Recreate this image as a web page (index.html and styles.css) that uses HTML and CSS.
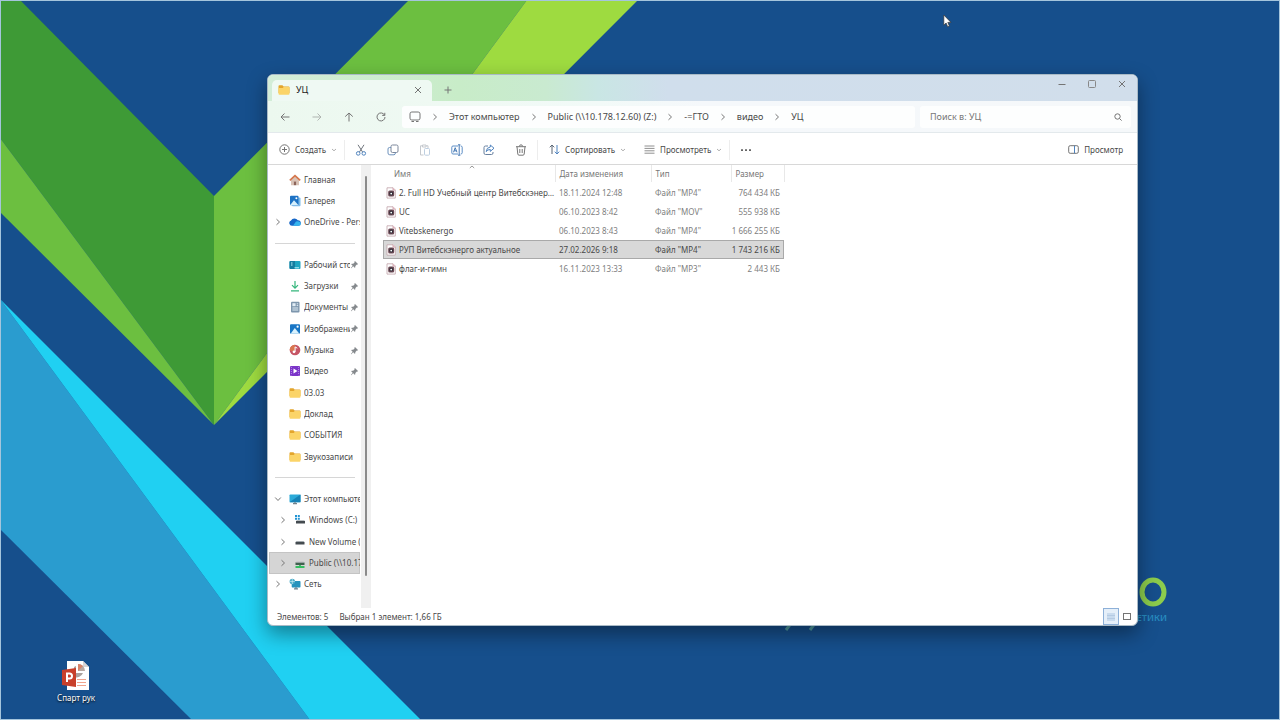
FILE: index.html
```html
<!DOCTYPE html>
<html lang="ru">
<head>
    <meta charset="UTF-8" />
    <meta name="viewport" content="width=device-width, initial-scale=1" />
    <title>УЦ</title>
    <link rel="stylesheet" href="styles.css">
</head>
<body>
    <!-- Shared icons -->
    <svg class="sprite" aria-hidden="true">
        <symbol id="folder" viewBox="0 0 12 12">
            <path d="M.5 2.2q0-.9.9-.9h3l1.2 1.3h5q.9 0 .9.9V9H.5z" fill="#e3a52c" />
            <path d="M.5 4h4.2l1-1h4.9q.9 0 .9.8v6q0 .9-.9.9H1.4q-.9 0-.9-.9z" fill="#fbd468" />
        </symbol>
        <symbol id="pin" viewBox="0 0 10 10">
            <path d="M5.5 1.2 8.9 4.5 8 5.2 7.6 5 6 6.6 5.8 8.3 5.2 8.7 3.6 7 1.4 9.1 1 8.8 3 6.5 1.4 4.9 1.9 4.3 3.6 4.1 5.2 2.5 4.9 2z" fill="#85898d" />
        </symbol>
        <symbol id="chev" viewBox="0 0 6 8">
            <path d="M1.5 1.2 4.5 4 1.5 6.8" fill="none" stroke="#777" />
        </symbol>
        <symbol id="caret" viewBox="0 0 6 4">
            <path d="M1 1 3 2.8 5 1" fill="none" stroke="#9a9a9a" stroke-width=".8" />
        </symbol>
        <symbol id="media" viewBox="0 0 10 12">
            <path d="M1 .8h6l2.3 2.3v8H1z" fill="#fff" stroke="#c0a2a8" stroke-width=".8" />
            <path d="M7 .8v2.3h2.3" fill="#f3dfe2" stroke="#c98b98" stroke-width=".7" />
            <rect x="2.2" y="3.6" width="6" height="6" rx="1.5" fill="#6d4a55" />
            <circle cx="5.2" cy="6.6" r="2" fill="#33303a" />
            <circle cx="5.2" cy="6.6" r=".9" fill="#fff" />
        </symbol>
    </svg>

    <svg class="wallpaper" viewBox="0 0 1280 720" preserveAspectRatio="xMidYMid slice" aria-hidden="true">
        <rect width="1280" height="720" fill="#164f8c" />
        <path d="M0 0H20L214 196V425L0 138z" fill="#3e9a36" />
        <path d="M0 138 214 425 0 212z" fill="#6cbf40" />
        <path d="M214 196 409 0H527L214 425z" fill="#6cbf40" />
        <path d="M527 0H638L214 425z" fill="#9edb40" />
        <path d="M0 299 310 720H192L0 529z" fill="#2a9ccf" />
        <path d="M0 299 421 720H310z" fill="#20d0f2" />
        <path d="M0 .5H1280M.5 0V720M1279.5 0V720M0 719.5H1280" stroke="#a5c5dc" />
        <ellipse cx="1153" cy="592" rx="11" ry="12" fill="none" stroke="#8ccc4c" stroke-width="5" />
        <path d="M786 630 792 622M810 630 816 622" stroke="#4f9aa0" stroke-width="3" />
        <text class="brand" x="1167" y="621" text-anchor="end">ЕТИКИ</text>
    </svg>

    <a class="shortcut" href="#">
        <svg width="28" height="32" viewBox="0 0 28 32" aria-hidden="true">
            <path d="M5 1h16l6 6v23H5z" fill="#fff" />
            <path d="M21 1v6h6z" fill="#d9d4d2" />
            <path d="M14 6v7h7A7 7 0 0 1 12 17V7z" fill="#aaa29f" />
            <path d="M16 4a7 7 0 0 1 7 7h-7z" fill="#b9a9a2" />
            <path d="M16 4a7 7 0 0 1 5 2l-5 5z" fill="#d98368" />
            <path d="M15 19.5h9M15 22.5h9M15 25.5h9" stroke="#efa48e" />
            <path d="M0 10 14 8V27L0 25z" fill="#c8402b" />
            <path d="M5 22V13.5h2.5a2.5 2.5 0 0 1 0 5H5" fill="none" stroke="#fff" stroke-width="2" />
        </svg>
        <span>Спарт рук</span>
    </a>

    <main class="window">
        <header class="titlebar">
            <div class="tab">
                <svg width="12" height="12"><use href="#folder" /></svg>
                <span class="tab-title">УЦ</span>
                <button aria-label="Закрыть вкладку">
                    <svg width="8" height="8" viewBox="0 0 8 8"><path d="M1 1 7 7M7 1 1 7" /></svg>
                </button>
            </div>
            <button class="new-tab" aria-label="Новая вкладка">
                <svg width="8" height="8" viewBox="0 0 8 8"><path d="M4 .5V7.5M.5 4H7.5" /></svg>
            </button>
            <div class="caption-buttons">
                <button aria-label="Свернуть"><svg width="8" height="8" viewBox="0 0 8 8"><path d="M.5 4.5H7.5" /></svg></button>
                <button aria-label="Развернуть"><svg width="8" height="8" viewBox="0 0 8 8"><rect x=".5" y=".5" width="7" height="7" rx="1" stroke="#888" /></svg></button>
                <button aria-label="Закрыть"><svg width="8" height="8" viewBox="0 0 8 8"><path d="M1 1 7 7M7 1 1 7" /></svg></button>
            </div>
        </header>

        <div class="navbar">
            <div class="nav-buttons">
                <button aria-label="Назад"><svg width="10" height="10" viewBox="0 0 10 10"><path d="M9.5 5H1M4.5 1.5 1 5 4.5 8.5" /></svg></button>
                <button aria-label="Вперёд" disabled><svg width="10" height="10" viewBox="0 0 10 10"><path d="M.5 5H9M5.5 1.5 9 5 5.5 8.5" /></svg></button>
                <button aria-label="Вверх"><svg width="10" height="10" viewBox="0 0 10 10"><path d="M5 9.5V1M1.2 4.6 5 1 8.8 4.6" /></svg></button>
                <button aria-label="Обновить"><svg width="10" height="10" viewBox="0 0 10 10"><path d="M8.6 3.2A4 4 0 1 0 9 5M8.8 .8V3.4H6.2" /></svg></button>
            </div>
            <nav class="address" aria-label="Адрес">
                <svg width="12" height="12" viewBox="0 0 12 12"><rect x="1" y="1" width="10" height="8" rx="1.8" /><path d="M2.5 10.5H5M7 10.5H9.5" /></svg>
                <svg width="6" height="8"><use href="#chev" /></svg>
                <a href="#">Этот компьютер</a>
                <svg width="6" height="8"><use href="#chev" /></svg>
                <a href="#">Public (\\10.178.12.60) (Z:)</a>
                <svg width="6" height="8"><use href="#chev" /></svg>
                <a href="#">-=ГТО</a>
                <svg width="6" height="8"><use href="#chev" /></svg>
                <a href="#">видео</a>
                <svg width="6" height="8"><use href="#chev" /></svg>
                <a href="#">УЦ</a>
            </nav>
            <label class="search">
                <input type="text" placeholder="Поиск в: УЦ" aria-label="Поиск в: УЦ" />
                <svg width="8" height="8" viewBox="0 0 8 8"><circle cx="3.5" cy="3.5" r="2.7" /><path d="M5.5 5.5 7.6 7.6" /></svg>
            </label>
        </div>

        <div class="toolbar">
            <button class="tool-text">
                <svg width="11" height="11" viewBox="0 0 11 11"><circle cx="5.5" cy="5.5" r="4.7" /><path d="M5.5 3V8M3 5.5H8" /></svg>
                Создать
                <svg width="6" height="4"><use href="#caret" /></svg>
            </button>
            <div class="tool-group">
                <button aria-label="Вырезать"><svg width="12" height="12" viewBox="0 0 12 12"><path d="M3 .8 7.7 8.2M9 .8 4.3 8.2" stroke="#70757d" /><circle cx="3.2" cy="9.4" r="1.8" stroke="#4f83be" /><circle cx="8.8" cy="9.4" r="1.8" stroke="#4f83be" /></svg></button>
                <button aria-label="Копировать"><svg width="12" height="12" viewBox="0 0 12 12"><rect x="4" y="1" width="7" height="7.5" rx="1.5" stroke="#7c879a" /><path d="M4 3.5H2.5Q1 3.5 1 5V9Q1 10.8 2.8 10.8H7Q8.3 10.8 8.5 8.6" stroke="#6f93bd" /></svg></button>
                <button aria-label="Вставить" disabled><svg width="12" height="12" viewBox="0 0 12 12"><path d="M4.5 11H1.5V1.8H3.5M7 1.8H9V4M3.5 1H7V3H3.5z" stroke="#8d949e" /><rect x="5.5" y="4.5" width="5" height="6.7" rx="1" stroke="#7fa0c4" /></svg></button>
                <button aria-label="Переименовать"><svg width="12" height="12" viewBox="0 0 12 12"><path d="M7 2H2Q.8 2 .8 3.2V8.8Q.8 10 2 10H7M9.7 2Q11.2 2 11.2 3.2V8.8Q11.2 10 9.7 10" stroke="#5d8ec6" /><path d="M8.2 .8V11.2M7 .8H9.4M7 11.2H9.4M2.5 8.3 4.2 3.7 6 8.3M3.1 6.8H5.4" stroke="#4779b4" /></svg></button>
                <button aria-label="Поделиться"><svg width="12" height="12" viewBox="0 0 12 12"><path d="M5 2H2.5Q1 2 1 3.5V9Q1 10.5 2.5 10.5H8.5Q10 10.5 10 9V8" stroke="#68809f" /><path d="M7.3 1 11 4.2 7.3 7.4V5.5Q4.6 5.4 3.2 7.6 3.6 3.3 7.3 3z" stroke="#4f83be" /></svg></button>
                <button aria-label="Удалить"><svg width="12" height="12" viewBox="0 0 12 12"><path d="M1 2.7H11M4.3 2.5Q4.5 .8 6 .8T7.7 2.5M2 2.8 2.8 10Q3 11.2 4 11.2H8Q9 11.2 9.2 10L10 2.8M4.8 5V9M7.2 5V9" stroke="#777" /></svg></button>
            </div>
            <button class="tool-text">
                <svg width="11" height="11" viewBox="0 0 11 11"><path d="M3 10V1M.8 3.3 3 1 5.2 3.3" stroke="#596573" /><path d="M8 1V10M5.8 7.7 8 10 10.2 7.7" stroke="#4f83be" /></svg>
                Сортировать
                <svg width="6" height="4"><use href="#caret" /></svg>
            </button>
            <button class="tool-text">
                <svg width="11" height="11" viewBox="0 0 11 11"><path d="M.5 2H10.5M.5 4.4H10.5M.5 6.8H10.5M.5 9.2H10.5" stroke-width=".8" /></svg>
                Просмотреть
                <svg width="6" height="4"><use href="#caret" /></svg>
            </button>
            <button class="more" aria-label="Дополнительно"><svg width="12" height="4" viewBox="0 0 12 4"><path d="M1 1.2H3V3H1zM5 1.2H7V3H5zM9 1.2H11V3H9z" fill="#666" stroke="none" /></svg></button>
            <button class="tool-text preview">
                <svg width="11" height="11" viewBox="0 0 11 11"><rect x=".7" y="1.7" width="9.6" height="7.6" rx="1.5" /><path d="M6.5 1.7V9.3" stroke="#4f83be" /></svg>
                Просмотр
            </button>
        </div>

        <div class="content">
            <nav class="sidebar" aria-label="Область навигации">
                <div class="tree">
                    <a href="#"><i></i><svg width="12" height="12" viewBox="0 0 12 12"><path d="M2 5.5V11.3H4.8V7.7H7.2V11.3H10V5.5L6 2z" fill="#d9c3b6" /><path d="M.8 6.4 6 1.6 11.2 6.4" fill="none" stroke="#d5764c" stroke-width="1.6" /><path d="M4.8 11.3V7.5H7.2V11.3z" fill="#8d655a" /></svg><span>Главная</span></a>
                    <a href="#"><i></i><svg width="12" height="12" viewBox="0 0 12 12"><rect x="3" y="2.5" width="8.5" height="8.8" rx="1" fill="#7dbbea" /><rect x="1" y=".8" width="8.5" height="9.4" rx="1" fill="#1d72c4" /><path d="M1 10.2 5 5.2 9.5 10.2z" fill="#d5effc" /><circle cx="7.4" cy="3.2" r="1" fill="#fff" /></svg><span>Галерея</span></a>
                    <a href="#"><svg class="chev" width="6" height="8"><use href="#chev" /></svg><svg width="12" height="12" viewBox="0 0 12 12"><path d="M3 9.8A2.8 2.8 0 0 1 2 4.4 4 4 0 0 1 8.8 4.2 2.8 2.8 0 0 1 9.2 9.8z" fill="#1667c7" /><path d="M4 9.8 7 5.4Q11.6 4.8 11.8 8 11.7 9.8 9.7 9.8z" fill="#35b4ee" /></svg><span>OneDrive - Personal</span></a>
                    <hr />
                    <a href="#"><i></i><svg width="12" height="12" viewBox="0 0 12 12"><rect x=".5" y="2" width="11" height="8" rx="1" fill="#20a6c2" /><path d="M.5 3Q.5 2 1.5 2H6V10H1.5Q.5 10 .5 9z" fill="#147da0" /><path d="M2 4H3.5M2 6H3.5M5.5 8.8H10" stroke="#bff3fa" /></svg><span>Рабочий стол</span><svg class="pin" width="9" height="9"><use href="#pin" /></svg></a>
                    <a href="#"><i></i><svg width="12" height="12" viewBox="0 0 12 12"><path d="M6 1V8M3 5.2 6 8.2 9 5.2M2 10.8H10" fill="none" stroke="#35b67c" stroke-width="1.2" /></svg><span>Загрузки</span><svg class="pin" width="9" height="9"><use href="#pin" /></svg></a>
                    <a href="#"><i></i><svg width="12" height="12" viewBox="0 0 12 12"><rect x="2" y=".8" width="8.5" height="10.6" rx="1" fill="#7d96ad" /><rect x="3.4" y="2.2" width="3.2" height="3" fill="#e1edf5" /><path d="M7.7 2.8H9.2M7.7 4.6H9.2M3.4 7H9.2M3.4 9H9.2" stroke="#e1edf5" /></svg><span>Документы</span><svg class="pin" width="9" height="9"><use href="#pin" /></svg></a>
                    <a href="#"><i></i><svg width="12" height="12" viewBox="0 0 12 12"><rect x="1" y="1.2" width="10" height="9.6" rx="1" fill="#1976c5" /><path d="M1.6 10.8 5.8 5 10.4 10.8z" fill="#d9f2fd" /><circle cx="8.6" cy="3.7" r="1.1" fill="#fff" /></svg><span>Изображения</span><svg class="pin" width="9" height="9"><use href="#pin" /></svg></a>
                    <a href="#"><i></i><svg width="12" height="12" viewBox="0 0 12 12"><circle cx="6" cy="6" r="5.3" fill="#c65565" /><path d="M6 .7A5.3 5.3 0 0 0 .7 6Q3 8 6 6z" fill="#d9774f" /><circle cx="5" cy="7.8" r="1.4" fill="#fff" /><path d="M6.1 7.8V2.9L8.3 4.2" fill="none" stroke="#fff" /></svg><span>Музыка</span><svg class="pin" width="9" height="9"><use href="#pin" /></svg></a>
                    <a href="#"><i></i><svg width="12" height="12" viewBox="0 0 12 12"><rect x="1" y="1" width="10" height="10" rx="1" fill="#7b35c8" /><path d="M2.4 2V10.4M9.6 2V10.4" stroke="#b68ae6" stroke-dasharray="1 1" /><path d="M4.5 3.6V8.4L8.5 6z" fill="#fff" /></svg><span>Видео</span><svg class="pin" width="9" height="9"><use href="#pin" /></svg></a>
                    <a href="#"><i></i><svg width="12" height="12"><use href="#folder" /></svg><span>03.03</span></a>
                    <a href="#"><i></i><svg width="12" height="12"><use href="#folder" /></svg><span>Доклад</span></a>
                    <a href="#"><i></i><svg width="12" height="12"><use href="#folder" /></svg><span>СОБЫТИЯ</span></a>
                    <a href="#"><i></i><svg width="12" height="12"><use href="#folder" /></svg><span>Звукозаписи</span></a>
                    <hr />
                    <a href="#"><svg class="chev open" width="6" height="8"><use href="#chev" /></svg><svg width="12" height="12" viewBox="0 0 12 12"><rect x=".5" y="1.5" width="11" height="7.8" rx=".8" fill="#2caad8" /><path d="M.5 9.3 11.5 1.5V9.3z" fill="#1782b6" /><path d="M4 10.6H8M6 9V10.6" stroke="#73828d" stroke-width="1.2" /></svg><span>Этот компьютер</span></a>
                    <a class="child" href="#"><svg class="chev" width="6" height="8"><use href="#chev" /></svg><svg width="12" height="12" viewBox="0 0 12 12"><path d="M1 1H3V3H1zM3.8 1H5.8V3H3.8zM1 3.8H3V5.8H1zM3.8 3.8H5.8V5.8H3.8z" fill="#2294d4" /><path d="M2 7H11V9.5H2z" fill="#444b50" /><path d="M2 7 3 6.2H10L11 7z" fill="#a5abaf" /></svg><span>Windows (C:)</span></a>
                    <a class="child" href="#"><svg class="chev" width="6" height="8"><use href="#chev" /></svg><svg width="12" height="12" viewBox="0 0 12 12"><path d="M1.5 6H10.5V8.5H1.5z" fill="#444b50" /><path d="M1.5 6 2.5 5H9.5L10.5 6z" fill="#a5abaf" /></svg><span>New Volume (D:)</span></a>
                    <a class="child selected" href="#"><svg class="chev" width="6" height="8"><use href="#chev" /></svg><svg width="12" height="12" viewBox="0 0 12 12"><path d="M1.5 5.5H10.5V8H1.5z" fill="#40604e" /><path d="M1.5 5.5 2.5 4.7H9.5L10.5 5.5z" fill="#a5abaf" /><path d="M1.5 10H10.5M6 8V10" stroke="#35bd61" stroke-width="1.8" /></svg><span>Public (\\10.178.12.60)</span></a>
                    <a href="#"><svg class="chev" width="6" height="8"><use href="#chev" /></svg><svg width="12" height="12" viewBox="0 0 12 12"><rect x="2.7" y="3" width="8.8" height="6.4" rx=".7" fill="#2793bd" /><path d="M5 10.8H9M7 9V10.8" stroke="#6d8290" stroke-width="1.2" /><circle cx="3.3" cy="3.5" r="2.7" fill="#4cabc8" /><path d="M.8 3.5H5.8M3.3 1V6" stroke="#d4f2f7" stroke-width=".6" /></svg><span>Сеть</span></a>
                </div>
                <div class="scrollbar"><div class="thumb"></div></div>
            </nav>

            <section class="files">
                <svg class="sort-mark" width="6" height="4" viewBox="0 0 6 4" aria-hidden="true"><path d="M.8 3 3 1 5.2 3" /></svg>
                <table>
                    <thead>
                        <tr><th class="name">Имя</th><th class="date">Дата изменения</th><th class="type">Тип</th><th class="size">Размер</th></tr>
                    </thead>
                    <tbody>
                        <tr><td><svg width="10" height="12"><use href="#media" /></svg>2. Full HD Учебный центр Витебскэнерго</td><td>18.11.2024 12:48</td><td>Файл "MP4"</td><td>764 434 КБ</td></tr>
                        <tr><td><svg width="10" height="12"><use href="#media" /></svg>UC</td><td>06.10.2023 8:42</td><td>Файл "MOV"</td><td>555 938 КБ</td></tr>
                        <tr><td><svg width="10" height="12"><use href="#media" /></svg>Vitebskenergo</td><td>06.10.2023 8:43</td><td>Файл "MP4"</td><td>1 666 255 КБ</td></tr>
                        <tr class="selected"><td><svg width="10" height="12"><use href="#media" /></svg>РУП Витебскэнерго актуальное</td><td>27.02.2026 9:18</td><td>Файл "MP4"</td><td>1 743 216 КБ</td></tr>
                        <tr><td><svg width="10" height="12"><use href="#media" /></svg>флаг-и-гимн</td><td>16.11.2023 13:33</td><td>Файл "MP3"</td><td>2 443 КБ</td></tr>
                    </tbody>
                </table>
            </section>
        </div>

        <footer class="statusbar">
            <span>Элементов: 5</span>
            <span>Выбран 1 элемент: 1,66 ГБ</span>
            <div class="views">
                <button class="active" aria-label="Таблица"><svg width="8" height="8" viewBox="0 0 8 8"><rect width="8" height="8" fill="#c9dbee" stroke="none" /><path d="M0 2.5H8M0 5.5H8" stroke="#b5cbe3" /></svg></button>
                <button aria-label="Крупные значки"><svg width="8" height="8" viewBox="0 0 8 8"><rect x=".5" y=".5" width="7" height="6" /></svg></button>
            </div>
        </footer>
    </main>

    <svg class="cursor" width="9" height="14" viewBox="0 0 9 14" aria-hidden="true">
        <path d="M.8 1V11.2L3.1 9 4.7 12.8 6.4 12 4.8 8.4H8z" fill="#fff" stroke="#333" stroke-width=".7" />
    </svg>
</body>
</html>
```
FILE: styles.css
```css
* {
    box-sizing: border-box;
}
body {
    margin: 0;
    height: 100vh;
    overflow: hidden;
    position: relative;
    background: #164f8c;
    color: #484848;
    font-family: "Noto Sans", "Open Sans", sans-serif;
    font-size: 8px;
    line-height: 12px;
}
a {
    color: inherit;
    text-decoration: none;
}
button {
    display: flex;
    align-items: center;
    justify-content: center;
    padding: 0;
    border: none;
    background: none;
    color: inherit;
    font: inherit;
}
svg {
    flex: none;
    fill: none;
    stroke: #747474;
}
symbol,
.tree svg,
.tab svg use,
td svg,
.shortcut svg,
.wallpaper {
    stroke: none;
}
.sprite {
    position: absolute;
    width: 0;
    height: 0;
}

/* Desktop */
.wallpaper {
    position: absolute;
    inset: 0;
    width: 100%;
    height: 100%;
}
.brand {
    fill: #278bc0;
    font-size: 9px;
    font-weight: 600;
}
.shortcut {
    position: absolute;
    left: 46px;
    bottom: 16px;
    width: 60px;
    display: flex;
    flex-direction: column;
    align-items: center;
    color: #fff;
    text-shadow: 0 1px 2px #000;
}
.cursor {
    position: absolute;
    left: 943px;
    top: 14px;
}

/* Explorer window */
.window {
    position: absolute;
    inset: 74px 142px 94px 267px;
    display: flex;
    flex-direction: column;
    overflow: hidden;
    border: 1px solid #a9bac6;
    border-radius: 6px;
    background: #fff;
    box-shadow: 0 8px 20px rgba(0, 0, 0, 0.4);
}
.titlebar {
    display: flex;
    height: 26px;
    background: linear-gradient(90deg, #d3edd8 0, #c8ecc8 22%, #c9ead0 32%, #c9e6e4 38%, #d0deec 46%, #d1deeb 100%);
}
.tab {
    display: flex;
    align-items: center;
    gap: 6px;
    width: 160px;
    margin: 5px 0 0 4px;
    padding: 0 10px 2px 6px;
    border-radius: 5px 5px 0 0;
    background: #eff9f3;
    color: #222;
}
.tab-title {
    flex: 1;
    font-size: 9px;
}
.new-tab {
    width: 31px;
    padding-top: 4px;
}
.caption-buttons {
    display: flex;
    height: 18px;
    margin-left: auto;
}
.caption-buttons button {
    width: 30px;
}
.navbar {
    display: flex;
    align-items: center;
    height: 32px;
    padding-right: 6px;
    border-bottom: 1px solid #e3e9ec;
    background: linear-gradient(90deg, #ecf8ef 0, #eff9f3 20%, #f2faf8 38%, #f5f8fb 50%, #f5f8fa 100%);
    font-size: 9px;
}
.nav-buttons,
.tool-group {
    display: flex;
}
.nav-buttons {
    padding-left: 1px;
}
.nav-buttons button,
.tool-group button {
    width: 32px;
    height: 20px;
}
.nav-buttons button:disabled,
.tool-group button:disabled {
    opacity: 0.5;
}
.address,
.search {
    display: flex;
    align-items: center;
    height: 22px;
    border-radius: 3px;
    background: #fdfefe;
}
.address {
    flex: 1;
    gap: 11px;
    margin: 0 5px;
    padding-left: 7px;
    white-space: nowrap;
}
.search {
    width: 211px;
    padding: 0 9px 0 10px;
}
.search input {
    flex: 1;
    min-width: 0;
    padding: 0;
    border: none;
    outline: none;
    background: none;
    font: inherit;
}
.search input::placeholder {
    color: #777;
    opacity: 1;
}
.toolbar {
    display: flex;
    align-items: center;
    height: 32px;
    padding-top: 2px;
    border-bottom: 1px solid #d8d8d8;
}
.tool-text {
    gap: 5px;
    height: 20px;
    padding: 0 7px 0 11px;
    white-space: nowrap;
}
.tool-group {
    border: solid #ededed;
    border-width: 0 1px;
}
.more {
    width: 32px;
    height: 20px;
    border-left: 1px solid #ededed;
}
.preview {
    margin-left: auto;
    padding: 0 14px;
}

/* Navigation pane */
.content {
    flex: 1;
    display: flex;
    min-height: 0;
}
.sidebar {
    display: flex;
    width: 103px;
}
.tree {
    flex: 1;
    min-width: 0;
    display: flex;
    flex-direction: column;
    padding: 4px 1px 13px;
}
.tree a {
    flex: 1;
    display: flex;
    align-items: center;
    min-height: 0;
    padding-left: 6px;
    white-space: nowrap;
}
.tree a.child {
    padding-left: 11px;
}
.tree a.selected {
    background: #d5d5d5;
    box-shadow: inset 0 0 0 1px #c4c4c4;
}
.tree i,
.tree .chev {
    width: 6px;
    margin-right: 8px;
}
.tree .open {
    transform: rotate(90deg);
}
.tree span {
    flex: 1;
    min-width: 0;
    overflow: hidden;
    margin-left: 3px;
}
.pin {
    margin-right: 1px;
}
.tree hr {
    flex: 1;
    width: 80px;
    margin: 0 0 0 6px;
    border: none;
    background: linear-gradient(#d6d6d6, #d6d6d6) center / 100% 1px no-repeat;
}
.scrollbar {
    width: 10px;
    padding: 11px 4px 32px;
    background: #f0f0f0;
}
.thumb {
    height: 100%;
    border-radius: 1px;
    background: #8b8b8b;
}

/* File list */
.files {
    flex: 1;
    position: relative;
    padding-left: 12px;
}
.sort-mark {
    position: absolute;
    left: 98px;
    top: 0;
    stroke: #999;
}
table {
    width: 401px;
    table-layout: fixed;
    border-collapse: collapse;
}
th {
    height: 17px;
    padding: 0 4px;
    border-right: 1px solid #e8e8e8;
    color: #777;
    font-weight: 400;
    text-align: left;
}
.name {
    width: 172px;
    padding-left: 11px;
}
.date {
    width: 96px;
}
.type {
    width: 80px;
}
.size {
    width: 53px;
}
td {
    height: 19px;
    padding: 0 4px;
    color: #808080;
    white-space: nowrap;
}
td:first-child {
    overflow: hidden;
    padding: 0 0 0 3px;
    color: #484848;
    text-overflow: ellipsis;
}
td:last-child {
    padding-left: 0;
    text-align: right;
}
td svg {
    margin-right: 3px;
    vertical-align: -3px;
}
tbody::before {
    content: "";
    display: block;
    height: 1px;
}
tr.selected {
    outline: 1px solid #a9a9a9;
    outline-offset: -1px;
    background: #d8d8d8;
}
tr.selected td {
    color: #484848;
}

/* Status bar */
.statusbar {
    display: flex;
    align-items: center;
    gap: 11px;
    height: 17px;
    padding: 0 2px 0 9px;
}
.views {
    display: flex;
    margin-left: auto;
}
.views button {
    width: 16px;
    height: 17px;
}
.views .active {
    border: 1px solid #8db0d8;
    background: #e5eff9;
}
```
